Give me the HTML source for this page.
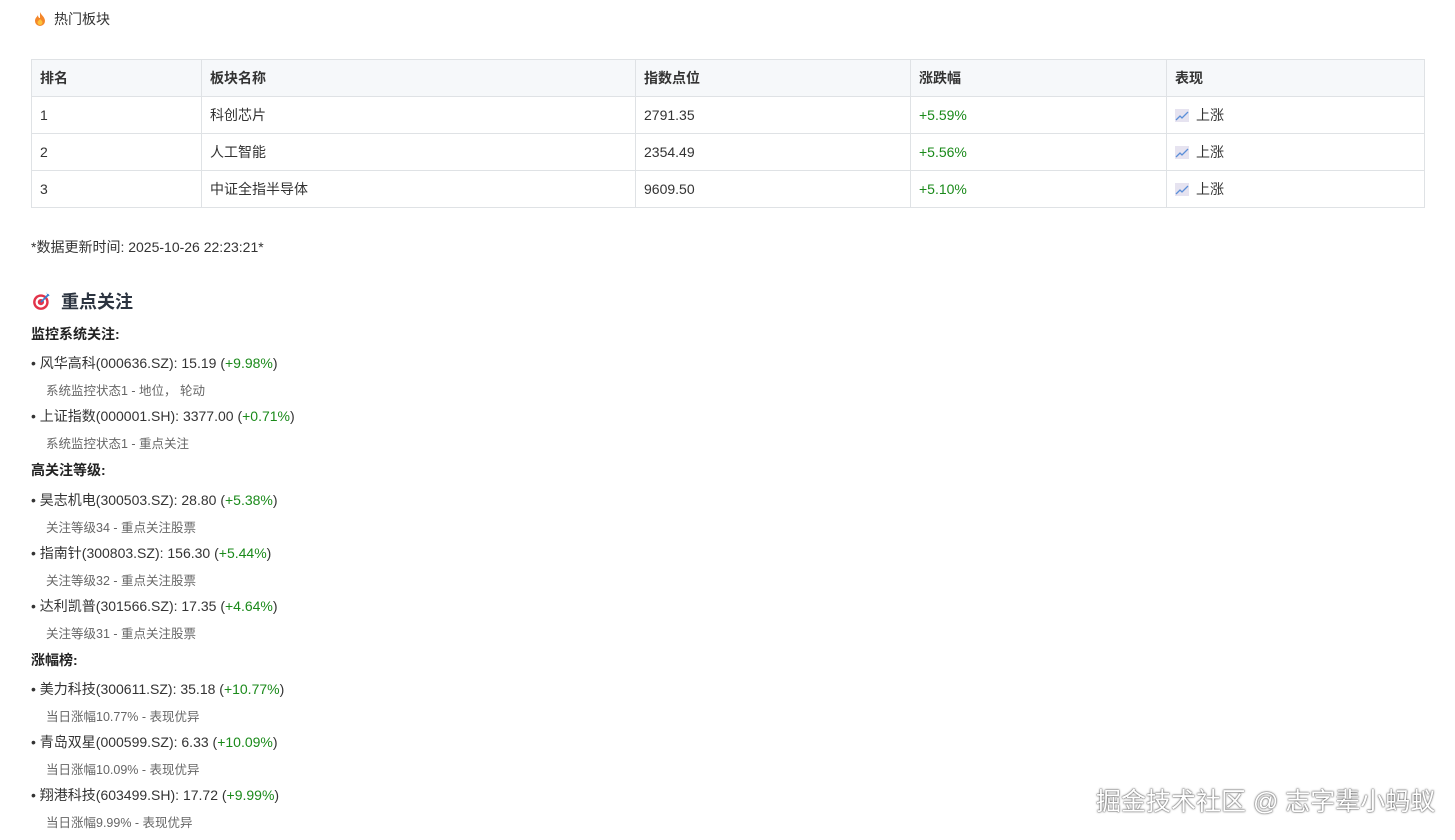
<!DOCTYPE html>
<html><head><meta charset="utf-8"><style>
*{margin:0;padding:0;box-sizing:border-box}
body{width:1455px;height:840px;background:#fff;font-family:"Liberation Sans","Noto Sans CJK SC",sans-serif;color:#333;font-size:14px;position:relative;overflow:hidden}
.a{position:absolute;white-space:nowrap;line-height:16px}
table{position:absolute;left:31px;top:59px;width:1394px;border-collapse:collapse;font-size:14px}
td,th{border:1px solid #dfe2e5;height:37px;padding:0 8px;text-align:left;color:#333}
th{background:#f6f8fa;font-weight:bold}
.g{color:#1a8a1a}
.s{color:#666;font-size:12.5px}
.b{font-weight:bold;color:#222}
.ic{display:inline-block;width:14px;height:13px;background:#e6e3f0;vertical-align:-2px;margin-right:7px;position:relative}
</style></head><body>
<div class="a" style="left:33px;top:11px;font-size:14px"><svg width="14" height="16" viewBox="0 0 14 16" style="vertical-align:-3px;margin-right:7px"><path d="M7 1C8 4 12 6 12 10a5 5 0 0 1-10 0c0-3 2-4 3-6 0 2 1 3 2 3 0-2 0-4 0-6z" fill="#f4862a"/><path d="M7 8c1 1 2.5 2 2.5 3.5a2.5 2.5 0 0 1-5 0C4.5 10 6 9.5 7 8z" fill="#fbc23a"/></svg>热门板块</div>
<table>
<tr><th style="width:170px">排名</th><th style="width:434px">板块名称</th><th style="width:275px">指数点位</th><th style="width:256px">涨跌幅</th><th>表现</th></tr>
<tr><td>1</td><td>科创芯片</td><td>2791.35</td><td class="g">+5.59%</td><td><svg class="ic" viewBox="0 0 14 13"><path d="M1 11L5 7l2 2 6-6" stroke="#5b8fd8" stroke-width="1.3" fill="none"/></svg>上涨</td></tr>
<tr><td>2</td><td>人工智能</td><td>2354.49</td><td class="g">+5.56%</td><td><svg class="ic" viewBox="0 0 14 13"><path d="M1 11L5 7l2 2 6-6" stroke="#5b8fd8" stroke-width="1.3" fill="none"/></svg>上涨</td></tr>
<tr><td>3</td><td>中证全指半导体</td><td>9609.50</td><td class="g">+5.10%</td><td><svg class="ic" viewBox="0 0 14 13"><path d="M1 11L5 7l2 2 6-6" stroke="#5b8fd8" stroke-width="1.3" fill="none"/></svg>上涨</td></tr>
</table>
<div class="a" style="left:31px;top:239px">*数据更新时间: 2025-10-26 22:23:21*</div>
<div class="a" style="left:32px;top:291px;font-size:18px;font-weight:bold;color:#2c3440;line-height:20px"><svg width="20" height="20" viewBox="0 0 18 18" style="vertical-align:-3px;margin-right:9px"><circle cx="8" cy="10" r="7" fill="#e2334a"/><circle cx="8" cy="10" r="4.8" fill="#fff"/><circle cx="8" cy="10" r="2.8" fill="#e2334a"/><path d="M8 10L15 3" stroke="#3a7fcf" stroke-width="1.6"/><path d="M13 1l1 2 2 1-2 1z" fill="#3a7fcf"/></svg>重点关注</div>
<div class="a b" style="left:31px;top:326px">监控系统关注:</div>
<div class="a" style="left:31px;top:355px">• 风华高科(000636.SZ): 15.19 (<span class="g">+9.98%</span>)</div>
<div class="a s" style="left:46px;top:383px">系统监控状态1 - 地位，  轮动</div>
<div class="a" style="left:31px;top:408px">• 上证指数(000001.SH): 3377.00 (<span class="g">+0.71%</span>)</div>
<div class="a s" style="left:46px;top:436px">系统监控状态1 - 重点关注</div>
<div class="a b" style="left:31px;top:462px">高关注等级:</div>
<div class="a" style="left:31px;top:492px">• 昊志机电(300503.SZ): 28.80 (<span class="g">+5.38%</span>)</div>
<div class="a s" style="left:46px;top:520px">关注等级34 - 重点关注股票</div>
<div class="a" style="left:31px;top:545px">• 指南针(300803.SZ): 156.30 (<span class="g">+5.44%</span>)</div>
<div class="a s" style="left:46px;top:573px">关注等级32 - 重点关注股票</div>
<div class="a" style="left:31px;top:598px">• 达利凯普(301566.SZ): 17.35 (<span class="g">+4.64%</span>)</div>
<div class="a s" style="left:46px;top:626px">关注等级31 - 重点关注股票</div>
<div class="a b" style="left:31px;top:652px">涨幅榜:</div>
<div class="a" style="left:31px;top:681px">• 美力科技(300611.SZ): 35.18 (<span class="g">+10.77%</span>)</div>
<div class="a s" style="left:46px;top:709px">当日涨幅10.77% - 表现优异</div>
<div class="a" style="left:31px;top:734px">• 青岛双星(000599.SZ): 6.33 (<span class="g">+10.09%</span>)</div>
<div class="a s" style="left:46px;top:762px">当日涨幅10.09% - 表现优异</div>
<div class="a" style="left:31px;top:787px">• 翔港科技(603499.SH): 17.72 (<span class="g">+9.99%</span>)</div>
<div class="a s" style="left:46px;top:815px">当日涨幅9.99% - 表现优异</div>
<div class="a" style="left:1096px;top:788px;font-size:25px;line-height:28px;color:#fff;text-shadow:0 0 2px #555,0 0 1px #333">掘金技术社区 @ 志字辈小蚂蚁</div>
</body></html>
